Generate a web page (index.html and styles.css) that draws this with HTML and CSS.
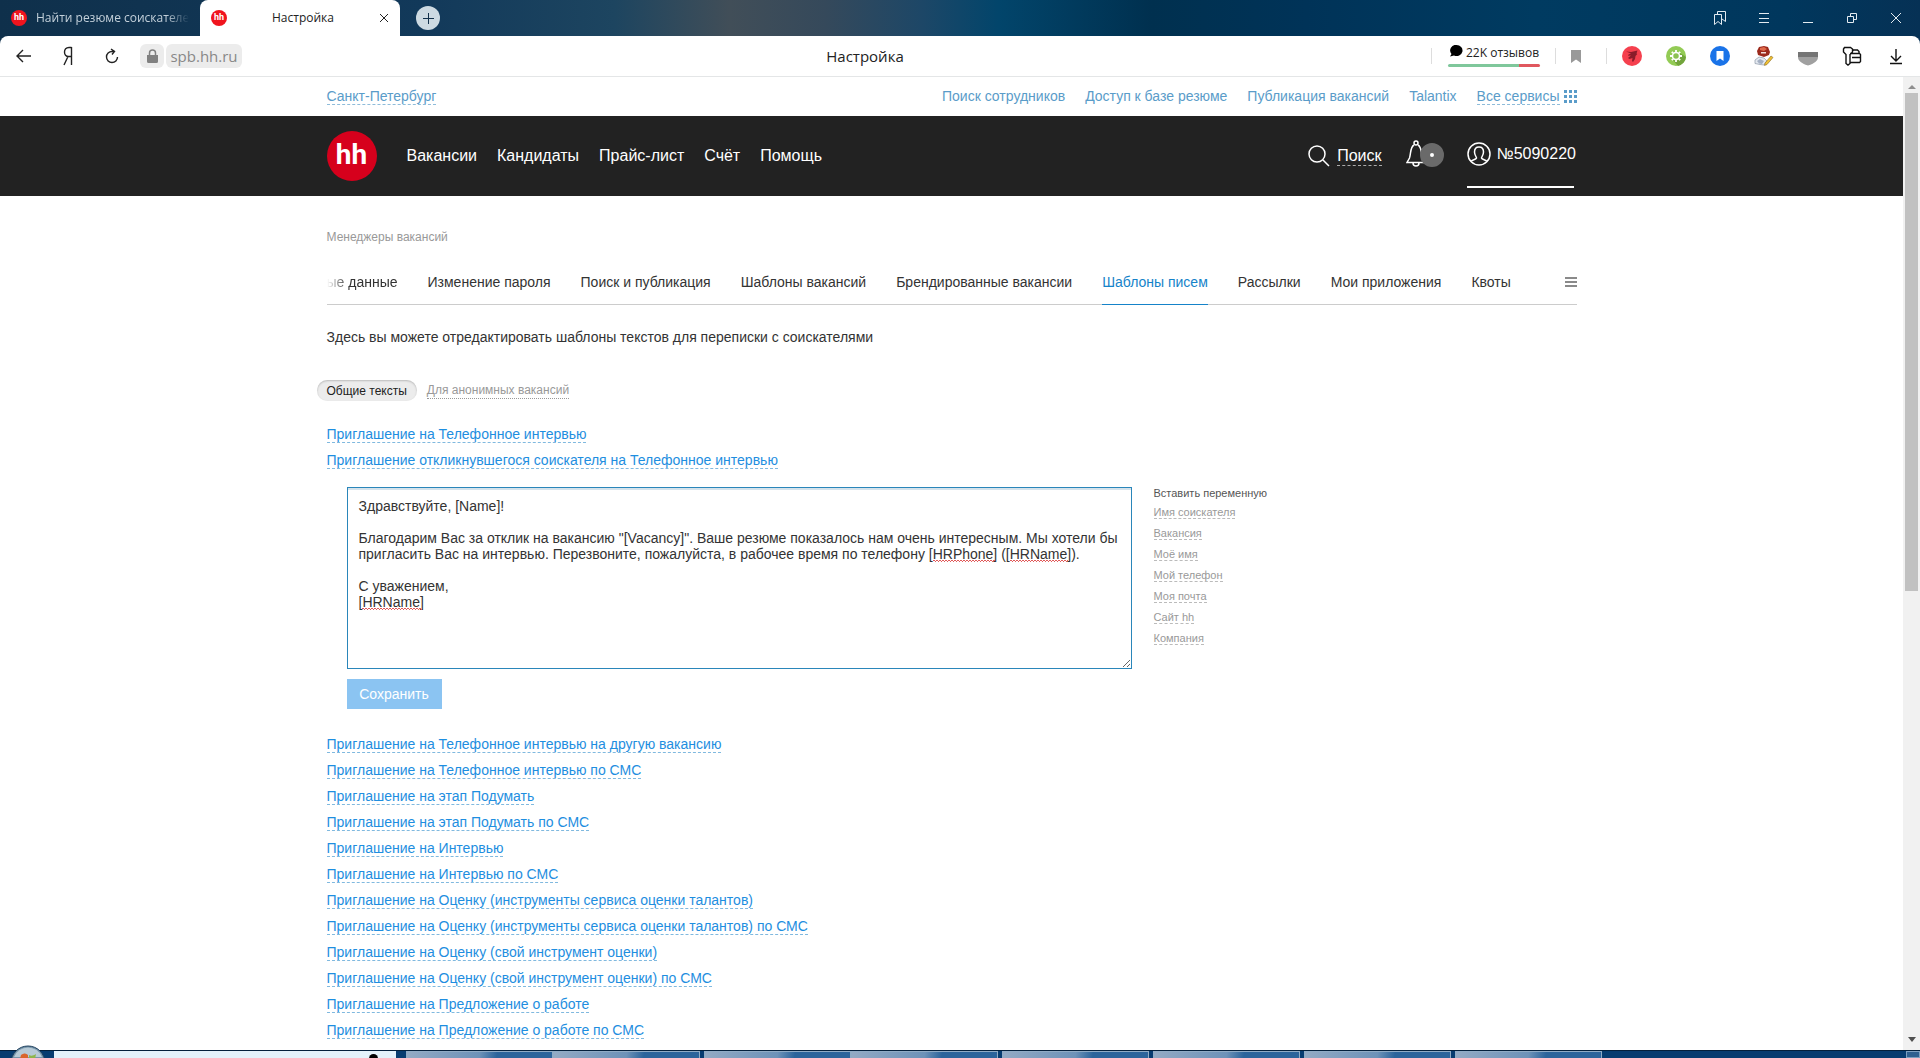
FILE: index.html
```html
<!DOCTYPE html>
<html lang="ru">
<head>
<meta charset="utf-8">
<title>Настройка</title>
<link rel="stylesheet" href="styles.css">
</head>
<body>
<header class="tabbar">
  <div class="tab">
    <span class="favicon">hh</span>
    <span class="tab-title tab-title-fade">Найти резюме соискателе</span>
  </div>
  <div class="tab tab-active">
    <span class="favicon">hh</span>
    <span class="tab-title">Настройка</span>
    <button class="icon-btn" aria-label="Закрыть вкладку"><svg width="10" height="10" viewBox="0 0 10 10"><path d="M1 1l8 8M9 1l-8 8"/></svg></button>
  </div>
  <button class="new-tab" aria-label="Новая вкладка"><svg width="13" height="13" viewBox="0 0 13 13"><path d="M6.500 1v11M1 6.500h11"/></svg></button>
  <div class="window-controls">
    <button class="icon-btn" aria-label="Закладки"><svg width="14" height="16" viewBox="0 0 14 16"><path d="M1.500 4.500h7v10l-3.500-3-3.500 3zM4.500 4V1.500h8v10L9 9"/></svg></button>
    <button class="icon-btn" aria-label="Меню"><svg width="12" height="12" viewBox="0 0 12 12"><path d="M1 1.500h10M1 6.500h10M1 10.500h10"/></svg></button>
    <button class="icon-btn" aria-label="Свернуть"><svg width="12" height="12" viewBox="0 0 12 12"><path d="M1 10.500h10"/></svg></button>
    <button class="icon-btn" aria-label="Восстановить"><svg width="12" height="12" viewBox="0 0 12 12"><path d="M1.500 4.500h6v6h-6zM4.500 4.500v-3h6v6h-3"/></svg></button>
    <button class="icon-btn" aria-label="Закрыть"><svg width="12" height="12" viewBox="0 0 12 12"><path d="M1 1l10 10M11 1L1 11"/></svg></button>
  </div>
</header>

<div class="toolbar-back">
<div class="toolbar">
  <div class="toolbar-left">
    <button class="icon-btn tool" aria-label="Назад"><svg width="16" height="14" viewBox="0 0 16 14"><path d="M15 7H1.500M7 1L1 7l6 6"/></svg></button>
    <button class="icon-btn tool" aria-label="Яндекс"><svg width="12" height="20" viewBox="0 0 12 20"><path d="M9.500 1v18M9.500 1.500H7C4 1.500 2.500 3.500 2.500 6S4 10.500 6.500 10.500h3M6 10.500L2 19"/></svg></button>
    <button class="icon-btn tool" aria-label="Обновить"><svg width="14" height="16" viewBox="0 0 14 16"><path d="M6 1l3.500 2.500L7 6.500M9.500 3.500H7a5.500 5.500 0 1 0 5.500 5.500"/></svg></button>
    <span class="lock"><svg width="11" height="14" viewBox="0 0 11 14"><path class="fill" d="M0 6h11v6.500a1.500 1.500 0 0 1-1.500 1.500h-8A1.500 1.500 0 0 1 0 12.500z"/><path d="M2.500 6V4a3 3 0 0 1 6 0v2"/></svg></span>
    <a class="host" href="#">spb.hh.ru</a>
  </div>
  <span class="page-title">Настройка</span>
  <div class="toolbar-right">
    <i class="divider"></i>
    <div class="reviews">
      <span class="reviews-row"><svg width="13" height="12" viewBox="0 0 13 12"><path d="M6.500 0a6 5.500 0 1 1-2.500 10.500L0 11.500 1.500 9A5.500 5.500 0 0 1 6.500 0z"/></svg>22K отзывов</span>
      <span class="rating"></span>
    </div>
    <i class="divider"></i>
    <svg class="bookmark" width="10" height="13" viewBox="0 0 10 13"><path fill="#999" d="M0 0h10v13L5 9.500 0 13z"/></svg>
    <i class="divider"></i>
    <div class="extensions">
      <svg width="20" height="20" viewBox="0 0 20 20"><circle cx="10" cy="10" r="10" fill="#f5404e"/><path fill="#8a1c2a" d="M4 5.500l5 .5 6.500-1.500-1 3 .8.500-1.800 2-.5 3-2 3-1-1 .5-3-3 1-1.500-1L9 9.500l-3 .3.500-1.300L9 7.500z"/></svg>
      <svg width="20" height="20" viewBox="0 0 20 20"><circle cx="10" cy="10" r="10" fill="#93cb55"/><path fill="#72a43c" d="M14 7l6 4a10 10 0 0 1-8 9l-5-6z"/><circle cx="10" cy="10" r="4.500" fill="#8cc152"/><g fill="none" stroke="#fff"><circle cx="10" cy="10" r="3.500" stroke-width="1.500"/><path stroke-width="1.800" d="M10 4v2M10 14v2M4 10h2M14 10h2M5.800 5.800l1.400 1.400M12.800 12.800l1.400 1.400M14.200 5.800l-1.400 1.400M7.200 12.800l-1.400 1.400"/></g></svg>
      <svg width="20" height="20" viewBox="0 0 20 20"><circle cx="10" cy="10" r="10" fill="#1a73e8"/><path fill="#fff" d="M6.500 5h7v10L10 12.500 6.500 15z"/></svg>
      <svg width="20" height="20" viewBox="0 0 20 20"><path fill="#e4e9f0" stroke="#8d98a8" stroke-width=".7" d="M1 14l4-3 5 1 3 3-3 4-4-.5-5-1z"/><path fill="#a3afc2" d="M3 15l3-2 4 2-2 3-3-.5z"/><path fill="#9c2a1c" d="M3 5l2-4 5-1 4 1 2 5-1 3-5 2-6-2z"/><path fill="#e06a4c" d="M6 2l4-1 3 2-3 2-4-1z"/><path fill="#f2dcd6" d="M7 6h5v1.500H7z"/><path fill="#f0c032" stroke="#8a6a20" stroke-width=".6" d="M11 17l6-7 2 1.500-6 7-2.500 1z"/></svg>
      <svg width="20" height="20" viewBox="0 0 20 20"><path fill="#757575" d="M0 6h20v5H0z"/><path fill="#a0a0a0" d="M0 11h20c0 4-4 6-7 7.500l-3 1-3-1C4 17 0 15 0 11z"/></svg>
      <svg width="20" height="20" viewBox="0 0 20 20"><path fill="none" stroke="#111" stroke-width="1.400" d="M2.500 1.500h6l2 1.500v3L8 8.500v9L6 19l-2-1.500V8.500L1.500 6V3zM10.500 5.500V5l1-1h4l1.500 1.500v2M8 7.500h9.500l1 1v7l-1 1H8M10 11.500h8"/></svg>
      <svg width="20" height="20" viewBox="0 0 20 20"><path fill="none" stroke="#111" stroke-width="1.400" d="M10 3v12M5 10l5 5 5-5M4 17.500h12"/></svg>
    </div>
  </div>
</div>
</div>

<div class="viewport">
  <main class="page">
    <nav class="topline wrap">
      <a class="dashed" href="#">Санкт-Петербург</a>
      <div class="topline-links">
        <a href="#">Поиск сотрудников</a>
        <a href="#">Доступ к базе резюме</a>
        <a href="#">Публикация вакансий</a>
        <a href="#">Talantix</a>
        <span class="services"><a class="dashed" href="#">Все сервисы</a><svg width="13" height="13" viewBox="0 0 13 13"><path fill="#5a9cc9" d="M0 0h3v3H0zM5 0h3v3H5zM10 0h3v3h-3zM0 5h3v3H0zM5 5h3v3H5zM10 5h3v3h-3zM0 10h3v3H0zM5 10h3v3H5zM10 10h3v3h-3z"/></svg></span>
      </div>
    </nav>

    <div class="navband">
      <div class="wrap navband-row">
        <a class="logo" href="#">hh</a>
        <nav class="mainnav">
          <a href="#">Вакансии</a>
          <a href="#">Кандидаты</a>
          <a href="#">Прайс-лист</a>
          <a href="#">Счёт</a>
          <a href="#">Помощь</a>
        </nav>
        <div class="usernav">
          <a class="search" href="#"><svg width="22" height="22" viewBox="0 0 22 22"><circle cx="9" cy="9" r="8"/><path d="M15 15l6 6"/></svg><span>Поиск</span></a>
          <button class="bell" aria-label="Уведомления"><svg width="20" height="28" viewBox="0 0 20 28"><circle cx="10" cy="3" r="2"/><path d="M8 5C4 7 5 14 3.500 18L1 22.500h18L16.500 18C15 14 16 7 12 5M7 23c0 4 6 4 6 0"/></svg><span class="badge"></span></button>
          <a class="account" href="#"><svg width="24" height="24" viewBox="0 0 24 24"><circle cx="12" cy="12" r="11"/><path d="M4 19.500c1-2 5-1.500 5.500-3.500 0-1-2-3-2-6 0-3.500 2-5 4.500-5s4.500 1.500 4.500 5c0 3-2 5-2 6 .5 2 4.500 1.500 5.500 3.500"/></svg><span>№5090220</span></a>
        </div>
      </div>
    </div>

    <div class="wrap content">
      <p class="section">Менеджеры вакансий</p>
      <nav class="tabs">
        <a class="cut" href="#">ые данные</a>
        <a href="#">Изменение пароля</a>
        <a href="#">Поиск и публикация</a>
        <a href="#">Шаблоны вакансий</a>
        <a href="#">Брендированные вакансии</a>
        <a class="current" href="#">Шаблоны писем</a>
        <a href="#">Рассылки</a>
        <a href="#">Мои приложения</a>
        <a href="#">Квоты</a>
        <button class="more" aria-label="Все разделы"><svg width="12" height="10" viewBox="0 0 12 10"><path fill="#8a8a8a" d="M0 0h12v2H0zM0 4h12v2H0zM0 8h12v2H0z"/></svg></button>
      </nav>
      <p class="lead">Здесь вы можете отредактировать шаблоны текстов для переписки с соискателями</p>
      <div class="switch">
        <button class="pill">Общие тексты</button>
        <a href="#">Для анонимных вакансий</a>
      </div>

      <ul class="templates">
        <li><a href="#">Приглашение на Телефонное интервью</a></li>
        <li><a href="#">Приглашение откликнувшегося соискателя на Телефонное интервью</a></li>
      </ul>

      <form class="editor">
        <div class="editor-main">
          <div class="field">
            <textarea aria-label="Текст шаблона" spellcheck="false">Здравствуйте, [Name]!

Благодарим Вас за отклик на вакансию "[Vacancy]". Ваше резюме показалось нам очень интересным. Мы хотели бы пригласить Вас на интервью. Перезвоните, пожалуйста, в рабочее время по телефону [HRPhone] ([HRName]).

С уважением,
[HRName]</textarea>
            <i class="squiggle squiggle-phone"></i>
            <i class="squiggle squiggle-name"></i>
            <i class="squiggle squiggle-sign"></i>
          </div>
          <button class="save" type="button">Сохранить</button>
        </div>
        <aside class="variables">
          <h2>Вставить переменную</h2>
          <ul>
            <li><a href="#">Имя соискателя</a></li>
            <li><a href="#">Вакансия</a></li>
            <li><a href="#">Моё имя</a></li>
            <li><a href="#">Мой телефон</a></li>
            <li><a href="#">Моя почта</a></li>
            <li><a href="#">Сайт hh</a></li>
            <li><a href="#">Компания</a></li>
          </ul>
        </aside>
      </form>

      <ul class="templates">
        <li><a href="#">Приглашение на Телефонное интервью на другую вакансию</a></li>
        <li><a href="#">Приглашение на Телефонное интервью по СМС</a></li>
        <li><a href="#">Приглашение на этап Подумать</a></li>
        <li><a href="#">Приглашение на этап Подумать по СМС</a></li>
        <li><a href="#">Приглашение на Интервью</a></li>
        <li><a href="#">Приглашение на Интервью по СМС</a></li>
        <li><a href="#">Приглашение на Оценку (инструменты сервиса оценки талантов)</a></li>
        <li><a href="#">Приглашение на Оценку (инструменты сервиса оценки талантов) по СМС</a></li>
        <li><a href="#">Приглашение на Оценку (свой инструмент оценки)</a></li>
        <li><a href="#">Приглашение на Оценку (свой инструмент оценки) по СМС</a></li>
        <li><a href="#">Приглашение на Предложение о работе</a></li>
        <li><a href="#">Приглашение на Предложение о работе по СМС</a></li>
      </ul>
    </div>
  </main>
  <div class="scrollbar">
    <svg width="8" height="4" viewBox="0 0 8 4"><path fill="#8f8f8f" d="M0 4l4-4 4 4z"/></svg>
    <div class="track"><div class="thumb"></div></div>
    <svg width="8" height="5" viewBox="0 0 8 5"><path fill="#505050" d="M0 0h8L4 5z"/></svg>
  </div>
</div>

<footer class="taskbar">
  <svg class="start" width="36" height="14" viewBox="0 0 36 14"><circle cx="18" cy="18" r="17" fill="#7896ab" stroke="#1c3e5c"/><path fill="#b7cad6" d="M4 12a15 15 0 0 1 28 0z"/><path fill="#d9642c" d="M11 10c3-2 5-2 7 0v4h-8z"/><path fill="#8fb54a" d="M19 10c2 1 4 1 7-1l-1 5h-6z"/></svg>
  <div class="language"><i></i></div>
  <div class="tasks"><i></i><i></i></div>
  <div class="tasks"><i></i><i></i></div>
  <div class="tasks"><i></i></div>
  <div class="tasks"><i></i></div>
  <div class="tasks"><i></i></div>
  <div class="tasks"><i></i></div>
  <i class="show-desktop"></i>
</footer>
</body>
</html>
```

FILE: styles.css
```css
* { box-sizing: border-box; }

body {
  margin: 0;
  height: 100vh;
  display: flex;
  flex-direction: column;
  overflow: hidden;
  background: #fff;
  color: #333;
  font: 14px/16px "Liberation Sans", Arial, sans-serif;
}

a { color: inherit; text-decoration: none; }
button { padding: 0; border: 0; background: none; color: inherit; font: inherit; }
p, h2, ul { margin: 0; padding: 0; }
ul { list-style: none; }
svg { display: block; flex: none; }

/* Browser tabs */
.tabbar {
  flex: none;
  height: 36px;
  display: flex;
  align-items: center;
  background: linear-gradient(90deg, #0f304b 0, #12395a 22%, #1d4560 32%, #414e58 38%, #35495b 43%, #1d4767 48%, #02456b 52%, #00304f 60%, #003358 68%, #003b61 80%, #00375d 93%, #063155 100%);
  font-family: "Open Sans", "Noto Sans", sans-serif;
}
.tab {
  width: 200px;
  height: 36px;
  padding: 0 11px;
  display: flex;
  align-items: center;
  gap: 9px;
  color: #c3d0da;
  font-size: 12px;
}
.tab-active {
  border-radius: 8px 8px 0 0;
  background: #fff;
  color: #222;
}
.tab-title { flex: 1; white-space: nowrap; text-align: center; }
.tab-title-fade { text-align: left; mask-image: linear-gradient(90deg, #000 85%, transparent); }
.favicon {
  flex: none;
  width: 16px;
  height: 16px;
  border-radius: 50%;
  background: #f0141e;
  color: #fff;
  font: bold 9px/15px Roboto, sans-serif;
  text-align: center;
}
.icon-btn { display: flex; align-items: center; justify-content: center; }
.icon-btn svg, .new-tab svg { fill: none; stroke: currentColor; }
.new-tab {
  width: 24px;
  height: 24px;
  margin-left: 16px;
  display: flex;
  align-items: center;
  justify-content: center;
  border-radius: 50%;
  background: #cddae2;
  color: #12304a;
}
.window-controls { margin-left: auto; padding-right: 2px; display: flex; color: #e3ebf1; }
.window-controls .icon-btn { width: 44px; height: 36px; }

/* Address bar */
.toolbar-back { flex: none; background: linear-gradient(90deg, #0f304b, #063155); }
.toolbar {
  height: 41px;
  display: grid;
  grid-template-columns: 1fr auto 1fr;
  align-items: center;
  border-bottom: 1px solid #e4e6e7;
  border-radius: 8px 8px 0 0;
  background: #fff;
  color: #222;
  font-family: "Open Sans", "Noto Sans", sans-serif;
}
.toolbar-left, .toolbar-right { display: flex; align-items: center; }
.toolbar-left { padding-left: 2px; }
.tool { width: 44px; height: 40px; }
.tool svg { stroke-width: 1.400; }
.lock, .host {
  height: 24px;
  display: flex;
  align-items: center;
  justify-content: center;
  border-radius: 6px;
  background: #ececec;
  color: #888;
}
.lock { width: 24px; margin: 0 2px 0 6px; }
.lock svg { fill: none; stroke: #808080; stroke-width: 1.500; }
.lock .fill { fill: #808080; stroke: none; }
.host { width: 76px; font-size: 15px; }
.page-title { font-size: 15px; padding-right: 190px; }
.toolbar-right { justify-content: flex-end; }
.divider { width: 1px; height: 16px; background: #ddd; }
.reviews { width: 92px; margin: 0 15px 0 16px; }
.reviews-row { display: flex; gap: 3px; padding-left: 2px; font-size: 12px; white-space: nowrap; }
.reviews-row svg { fill: #000; }
.rating {
  display: block;
  height: 3px;
  margin-top: 3px;
  border-radius: 2px;
  background: linear-gradient(90deg, #7fc79b 77%, #e0575e 77%);
}
.bookmark { margin: 0 25px 0 15px; }
.extensions { display: flex; gap: 24px; padding: 0 14px 0 15px; }

/* Site */
.viewport { flex: 1; min-height: 0; display: flex; }
.page { flex: 1; min-width: 0; overflow: hidden; }
.wrap { width: 1250px; max-width: 100%; margin: 0 auto; }
.dashed { border-bottom: 1px dashed #8fbcda; }
.topline {
  height: 39px;
  display: flex;
  align-items: center;
  justify-content: space-between;
  color: #5a9cc9;
}
.topline-links { display: flex; gap: 20px; }
.services { display: flex; align-items: center; gap: 4px; }

.navband { background: #222; color: #fff; font-size: 16px; line-height: 20px; }
.navband-row { height: 80px; display: flex; align-items: center; }
.logo {
  width: 50px;
  height: 50px;
  border-radius: 50%;
  background: #d6001c;
  font: bold 28px/48px Roboto, sans-serif;
  text-align: center;
}
.mainnav { display: flex; gap: 20px; margin-left: 30px; }
.usernav { margin-left: auto; display: flex; align-items: center; }
.usernav svg { fill: none; stroke: #fff; stroke-width: 1.500; }
.search { display: flex; align-items: center; gap: 7px; }
.search span { border-bottom: 1px dashed #aaa; line-height: 18px; }
.bell { position: relative; width: 40px; margin: 0 21px 4px 24px; }
.badge {
  position: absolute;
  right: 2px;
  top: 3px;
  width: 24px;
  height: 24px;
  border: 10px solid #6a6a6a;
  border-radius: 50%;
  background: #fff;
}
.account {
  width: 107px;
  height: 66px;
  margin: 0 3px 2px 0;
  padding-bottom: 20px;
  display: flex;
  align-items: flex-end;
  gap: 6px;
  border-bottom: 2px solid #fff;
}
.account span { line-height: 24px; }

.content { padding-top: 32px; }
.section { color: #999; font-size: 12px; line-height: 18px; }
.tabs {
  display: flex;
  gap: 30px;
  margin-top: 17px;
  border-bottom: 1px solid #ccc;
  white-space: nowrap;
}
.tabs a { padding: 10px 0 13px; line-height: 18px; margin-bottom: -1px; }
.tabs .cut { mask-image: linear-gradient(90deg, transparent, #000 30%); }
.tabs .current { color: #1583c9; border-bottom: 1px solid #1583c9; }
.more { margin-left: auto; padding-bottom: 3px; }
.lead { margin-top: 23px; line-height: 18px; }
.switch {
  display: flex;
  align-items: center;
  gap: 10px;
  margin: 34px 0 20px -10px;
  color: #999;
  font-size: 12px;
}
.switch a { border-bottom: 1px dotted #999; line-height: 15px; }
.pill {
  height: 21px;
  padding: 0 10px;
  border-radius: 11px;
  background: #ececec;
  box-shadow: inset 0 1px 2px #bbb;
  color: #222;
}
.templates { color: #1e8ee0; line-height: 26px; }
.templates a { border-bottom: 1px dashed #80b9df; }

.editor { display: flex; gap: 22px; padding: 14px 0 22px 20px; }
.editor-main { width: 785px; }
.field { position: relative; }
textarea {
  display: block;
  width: 100%;
  height: 182px;
  padding: 10px 11px;
  border: 1px solid #2a86ba;
  box-shadow: inset 0 2px 0 #d5e3ec;
  color: #333;
  font: inherit;
  outline: 0;
}
.squiggle {
  position: absolute;
  height: 3px;
  background: repeating-linear-gradient(90deg, #e05a5a 0 2px, transparent 2px 3px) 0 1px / 100% 1px no-repeat, repeating-linear-gradient(90deg, transparent 0 2px, #e05a5a 2px 3px) 0 2px / 100% 1px no-repeat;
}
.squiggle-phone { left: 586px; top: 72px; width: 62px; }
.squiggle-name { left: 663px; top: 72px; width: 58px; }
.squiggle-sign { left: 15px; top: 120px; width: 60px; }
.save {
  width: 95px;
  height: 30px;
  margin-top: 10px;
  background: #8bc4f2;
  color: #fff;
}
.variables { color: #999; font-size: 11px; }
.variables h2 { margin-bottom: 3px; color: #555; font-size: 11px; font-weight: normal; line-height: 12px; }
.variables li { line-height: 21px; }
.variables a { border-bottom: 1px dashed #bbb; }

.scrollbar {
  flex: none;
  width: 17px;
  padding: 8px 0;
  display: flex;
  flex-direction: column;
  align-items: center;
  gap: 4px;
  background: #f1f1f1;
}
.track { flex: 1; width: 13px; }
.thumb { height: 53%; background: #c1c1c1; }

/* Taskbar */
.taskbar {
  flex: none;
  height: 8px;
  display: flex;
  gap: 4px;
  border-top: 1px solid #04203c;
  background: #073c70;
}
.start { margin: -6px 4px 0 10px; }
.language { width: 342px; margin-right: 6px; background: #e4f2fb; }
.language i {
  display: block;
  width: 9px;
  height: 5px;
  margin: 3px 0 0 315px;
  border-radius: 5px 5px 0 0;
  background: #000;
}
.tasks { display: flex; }
.tasks i {
  width: 147px;
  border: 1px solid #8fabc5;
  border-bottom: 0;
  background: linear-gradient(100deg, #93aac4, #6d92b8 50%, #2c649b 62%);
}
.show-desktop { width: 14px; margin-left: auto; border: 1px solid #7d9fc0; background: #2f6090; }
```
